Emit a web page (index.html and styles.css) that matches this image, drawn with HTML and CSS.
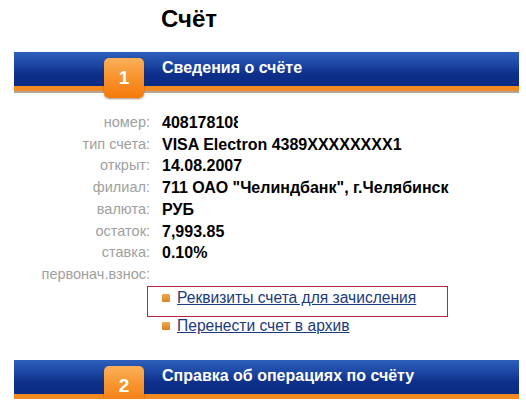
FILE: index.html
```html
<!DOCTYPE html>
<html lang="ru">
<head>
<meta charset="utf-8">
<link rel="stylesheet" href="styles.css">
</head>
<body>
<div class="page">
  <h1 class="title">Счёт</h1>

  <div class="banner">
    <div class="badge">1</div>
    <div class="banner-text">Сведения о счёте</div>
  </div>

  <div class="details">
    <div class="lbl">номер:</div><div class="val"><span class="clip">408178108000000123</span></div>
    <div class="lbl">тип счета:</div><div class="val">VISA Electron 4389XXXXXXXX1</div>
    <div class="lbl">открыт:</div><div class="val">14.08.2007</div>
    <div class="lbl">филиал:</div><div class="val">711 ОАО "Челиндбанк", г.Челябинск</div>
    <div class="lbl">валюта:</div><div class="val">РУБ</div>
    <div class="lbl">остаток:</div><div class="val">7,993.85</div>
    <div class="lbl">ставка:</div><div class="val">0.10%</div>
    <div class="lbl">первонач.взнос:</div><div class="val"></div>
  </div>

  <div class="links">
    <div class="link-item boxed"><span class="bullet"></span><a href="#">Реквизиты счета для зачисления</a></div>
    <div class="link-item second"><span class="bullet"></span><a href="#">Перенести счет в архив</a></div>
  </div>

  <div class="banner">
    <div class="badge">2</div>
    <div class="banner-text">Справка об операциях по счёту</div>
  </div>
</div>
</body>
</html>
```

FILE: styles.css
```css
html, body {
  margin: 0;
  padding: 0;
  background: #ffffff;
}

.page {
  width: 526px;
  font-family: "Liberation Sans", Arial, sans-serif;
}

.title {
  margin: 0;
  padding: 5px 0 0 161px;
  font-size: 24px;
  line-height: 28px;
  font-weight: bold;
  color: #000;
}

.banner {
  position: relative;
  margin: 19px 7px 0 14px;
  height: 34px;
  background: linear-gradient(to bottom, #2c5fbb 0%, #1d48a4 35%, #0e2f8a 65%, #0b2b84 100%);
  border-bottom: 5px solid #f28a22;
  box-shadow: 0 2px 0 #b5a597;
  display: flex;
  align-items: center;
}

.badge {
  position: absolute;
  left: 90px;
  top: 6px;
  width: 40px;
  height: 40px;
  border-radius: 5px;
  background: linear-gradient(to bottom, #fbb05a 0%, #f89530 45%, #f57a0c 100%);
  box-shadow: 0 1px 2px rgba(80, 40, 0, 0.5);
  color: #fff;
  font-weight: bold;
  font-size: 19px;
  display: flex;
  align-items: center;
  justify-content: center;
}

.banner-text {
  padding-left: 148px;
  color: #fff;
  font-weight: bold;
  font-size: 16px;
  padding-bottom: 2px;
}

.details {
  margin-top: 21px;
  display: grid;
  grid-template-columns: 150px 1fr;
  column-gap: 12px;
}

.lbl {
  text-align: right;
  color: #a0a0a0;
  font-size: 14.5px;
  line-height: 21.7px;
  white-space: nowrap;
}

.val {
  font-weight: bold;
  font-size: 16px;
  line-height: 21.7px;
  color: #000;
  white-space: nowrap;
}

.clip {
  display: inline-block;
  width: 76px;
  overflow: hidden;
  vertical-align: top;
}

.links {
  margin-left: 147px;
}

.link-item {
  display: flex;
  align-items: center;
  line-height: 20px;
  font-size: 15.6px;
}

.boxed {
  box-sizing: border-box;
  width: 301px;
  border: 1px solid #b8233e;
  padding: 1px 0 8px 14px;
}

.second {
  margin-top: -1px;
  padding-left: 15px;
}

.bullet {
  width: 8px;
  height: 8px;
  border-radius: 1px;
  background: linear-gradient(to bottom, #f0a850, #d9821e);
  margin-right: 7px;
  flex: none;
}

.link-item a {
  color: #1d3a7c;
  text-decoration: underline;
}

.links + .banner {
  margin-top: 24px;
}
```
